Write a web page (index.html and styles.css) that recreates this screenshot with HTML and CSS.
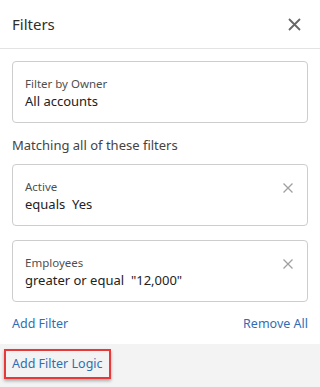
FILE: index.html
```html
<!DOCTYPE html>
<html lang="en">
<head>
    <meta charset="UTF-8">
    <meta name="viewport" content="width=device-width, initial-scale=1.0">
    <title>Filters</title>
    <link rel="stylesheet" href="styles.css">
</head>
<body>
    <div class="panel">
        <div class="panel-header">
            <h2>Filters</h2>
            <button class="close-btn" aria-label="Close">
                <svg width="13" height="13" viewBox="0 0 13 13"><path d="M1 1L12 12M12 1L1 12" stroke="#676767" stroke-width="1.8"/></svg>
            </button>
        </div>

        <div class="panel-body">
            <div class="filter-card">
                <div>
                    <div class="filter-label">Filter by Owner</div>
                    <div class="filter-value">All accounts</div>
                </div>
            </div>

            <p class="section-title">Matching all of these filters</p>

            <div class="filter-card">
                <div>
                    <div class="filter-label">Active</div>
                    <div class="filter-value">equals&nbsp; Yes</div>
                </div>
                <button class="remove-btn" aria-label="Remove">
                    <svg width="10" height="10" viewBox="0 0 10 10"><path d="M0.5 0.5L9.5 9.5M9.5 0.5L0.5 9.5" stroke="#a0a0a0" stroke-width="1.3"/></svg>
                </button>
            </div>

            <div class="filter-card">
                <div>
                    <div class="filter-label">Employees</div>
                    <div class="filter-value">greater or equal&nbsp; "12,000"</div>
                </div>
                <button class="remove-btn" aria-label="Remove">
                    <svg width="10" height="10" viewBox="0 0 10 10"><path d="M0.5 0.5L9.5 9.5M9.5 0.5L0.5 9.5" stroke="#a0a0a0" stroke-width="1.3"/></svg>
                </button>
            </div>

            <div class="actions">
                <a href="#">Add Filter</a>
                <a href="#">Remove All</a>
            </div>
        </div>

        <div class="panel-footer">
            <a href="#" class="logic-link">Add Filter Logic</a>
        </div>
    </div>
</body>
</html>
```

FILE: styles.css
```css
body {
    margin: 0;
    font-family: "Noto Sans", Arial, sans-serif;
    background-color: #fff;
    color: #2b2b2b;
}

.panel {
    width: 320px;
    height: 387px;
    display: flex;
    flex-direction: column;
    overflow: hidden;
}

.panel-header {
    flex-shrink: 0;
    height: 48px;
    display: flex;
    align-items: center;
    justify-content: space-between;
    padding: 0 19px 0 12px;
    border-bottom: 1px solid #e3e3e3;
}

.panel-header h2 {
    margin: 0;
    font-size: 15px;
    font-weight: normal;
    color: #2e2e2e;
}

.close-btn,
.remove-btn {
    border: none;
    background: none;
    padding: 0;
    cursor: pointer;
    display: flex;
}

.panel-body {
    flex-shrink: 0;
    padding: 12px 12px 0;
}

.filter-card {
    display: flex;
    justify-content: space-between;
    align-items: flex-start;
    border: 1px solid #cdcdcd;
    border-radius: 4px;
    padding: 13px 14px 0 12px;
    height: 62px;
    box-sizing: border-box;
    margin-bottom: 14px;
}

.filter-label {
    font-size: 11.5px;
    color: #4f4f4f;
    line-height: 17px;
}

.filter-value {
    font-size: 13px;
    color: #222;
    line-height: 19px;
}

.remove-btn {
    margin-top: 5px;
}

.section-title {
    margin: -1px 0 10px;
    font-size: 13px;
    line-height: 18px;
    color: #444;
}

.actions {
    display: flex;
    justify-content: space-between;
    margin-top: -13px;
    padding-top: 12px;
    height: 29px;
    font-size: 12.5px;
    line-height: 18px;
}

.actions a,
.logic-link {
    color: #2f6eb4;
    text-decoration: none;
}

.panel-footer {
    flex: 1;
    background-color: #f3f3f3;
    padding: 5px 4px;
}

.logic-link {
    display: inline-block;
    font-size: 12.5px;
    line-height: 18px;
    padding: 4px 6px 4px 6px;
    border: 2px solid #e5393a;
    box-shadow: 0 2px 3px rgba(0, 0, 0, 0.3);
}
```
